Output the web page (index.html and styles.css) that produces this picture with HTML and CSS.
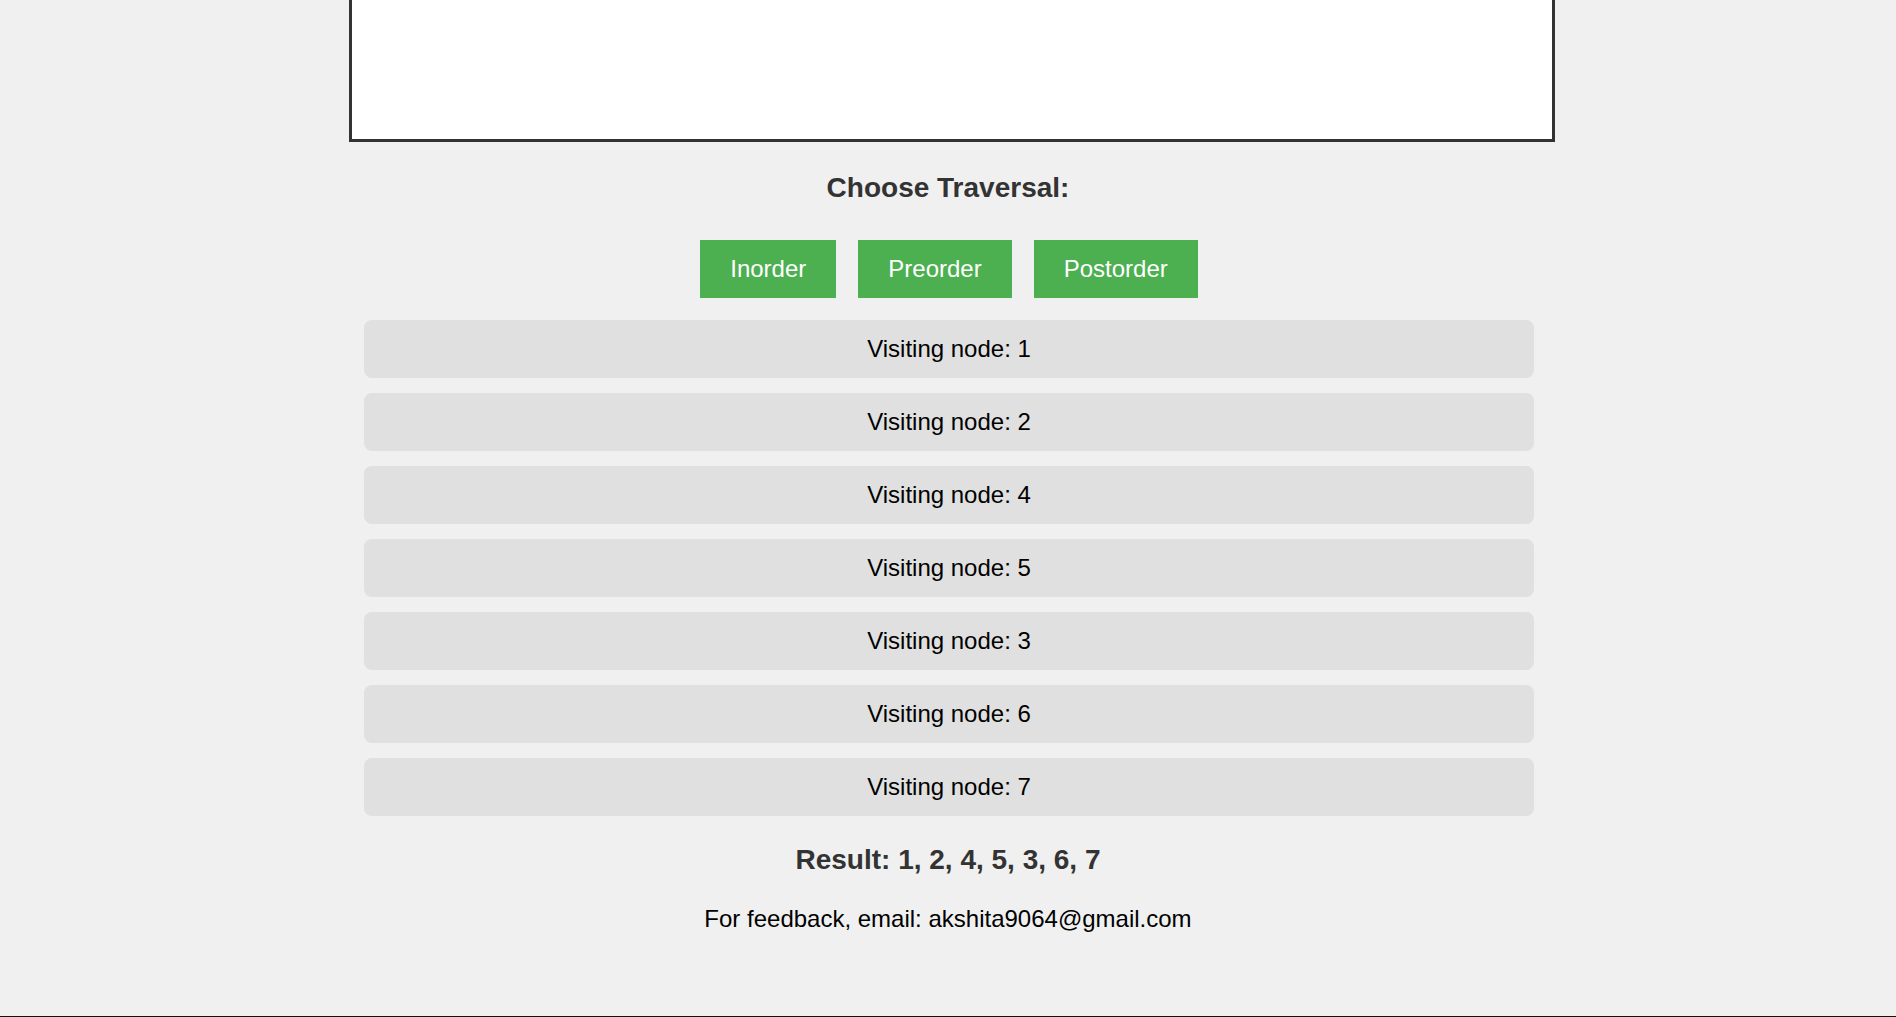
FILE: index.html
```html
<!DOCTYPE html>
<html lang="en">
<head>
<meta charset="utf-8">
<title>Tree Traversal</title>
<link rel="stylesheet" href="styles.css">
</head>
<body>
  <div class="canvas-box"></div>
  <h2 class="title">Choose Traversal:</h2>
  <div class="buttons">
    <button class="btn">Inorder</button>
    <button class="btn">Preorder</button>
    <button class="btn">Postorder</button>
  </div>
  <div class="steps">
    <div class="step">Visiting node: 1</div>
    <div class="step">Visiting node: 2</div>
    <div class="step">Visiting node: 4</div>
    <div class="step">Visiting node: 5</div>
    <div class="step">Visiting node: 3</div>
    <div class="step">Visiting node: 6</div>
    <div class="step">Visiting node: 7</div>
  </div>
  <h3 class="result">Result: 1, 2, 4, 5, 3, 6, 7</h3>
  <p class="feedback">For feedback, email: akshita9064@gmail.com</p>
  <footer class="footer"></footer>
</body>
</html>
```

FILE: styles.css
```css
html, body {
  margin: 0;
  padding: 0;
}

body {
  background: #f0f0f0;
  font-family: "Liberation Sans", Arial, sans-serif;
  font-size: 24px;
  color: #000;
  text-align: center;
}

.canvas-box {
  box-sizing: content-box;
  width: 1200px;
  height: 139px;
  background: #fff;
  border: 3px solid #333;
  border-top: none;
  margin-left: calc(50% - 599px);
}

.title {
  margin: 30px 0 36px;
  font-size: 28px;
  line-height: 32px;
  font-weight: bold;
  color: #333;
}

.buttons {
  display: flex;
  justify-content: center;
  gap: 22px;
  padding-left: 2px;
}

.btn {
  font-family: "Liberation Sans", Arial, sans-serif;
  font-size: 24px;
  line-height: 28px;
  padding: 15px 30px;
  border: none;
  border-radius: 0;
  background: #4caf50;
  color: #fff;
  cursor: pointer;
}

.steps {
  width: 1170px;
  margin: 22px 0 0 calc(50% - 584px);
  display: flex;
  flex-direction: column;
  gap: 15px;
}

.step {
  height: 58px;
  display: flex;
  align-items: center;
  justify-content: center;
  background: #e0e0e0;
  border-radius: 8px;
  color: #000;
}

.result {
  margin: 28px 0 0;
  font-size: 28px;
  line-height: 32px;
  font-weight: bold;
  color: #333;
}

.feedback {
  margin: 29px 0 0;
  line-height: 28px;
  color: #000;
}

.footer {
  margin-top: 83px;
  border-top: 2px solid #111;
  height: 40px;
}
```
